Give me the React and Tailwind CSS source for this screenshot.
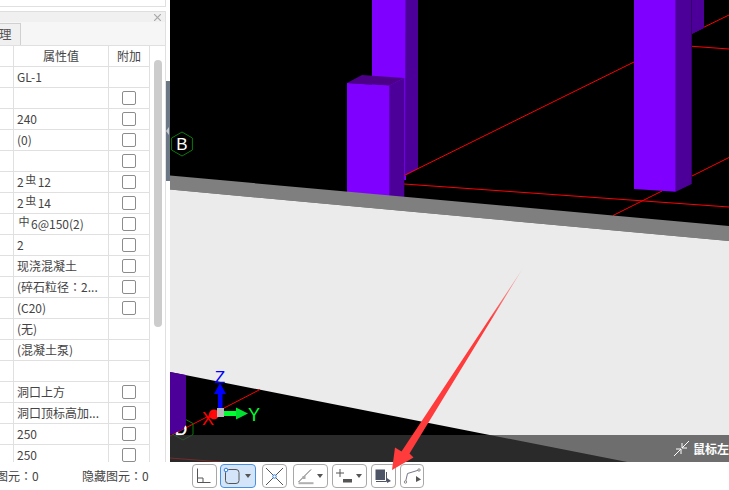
import React from "react";

const D = ({ t }) => <span className="text-[11px] leading-[0] align-[3px] mx-[1.5px]">{t}</span>;
const C = () => <span className="font-['Noto_Sans_CJK_JP',sans-serif]">：</span>;

const rows = [
  { v: "GL-1", c: false },
  { v: "", c: true },
  { v: "240", c: true },
  { v: "(0)", c: true },
  { v: "", c: true },
  { v: <>2<D t="虫" />12</>, c: true },
  { v: <>2<D t="虫" />14</>, c: true },
  { v: <><D t="中" />6@150(2)</>, c: true },
  { v: "2", c: true },
  { v: "现浇混凝土", c: true },
  { v: <>(碎石粒径<C />2...</>, c: true },
  { v: "(C20)", c: true },
  { v: "(无)", c: false },
  { v: "(混凝土泵)", c: false },
  { v: "", c: false },
  { v: "洞口上方", c: true },
  { v: "洞口顶标高加...", c: true },
  { v: "250", c: true },
  { v: "250", c: true },
];

function Caret() {
  return <span className="ml-auto mr-[4px] w-0 h-0 border-x-[3px] border-x-transparent border-t-[4px] border-t-[#555]" />;
}

function Btn({ w = "w-[24.5px]", active, ml, children, caret }) {
  return (
    <div className={`${w} ${ml} h-[24.5px] shrink-0 flex items-center rounded-[4px] border ${active ? "border-[#4a90e2] bg-[#d5e5f9]" : "border-[#a8a8a8] bg-white"}`}>
      <svg width="23" height="23" viewBox="0 0 23 23" fill="none" className="shrink-0">{children}</svg>
      {caret && <Caret />}
    </div>
  );
}

function Canvas() {
  return (
    <svg viewBox="170 0 559 462" width="559" height="462" className="block">
      <rect x="170" y="0" width="559" height="462" fill="#000" />
      {/* back column left */}
      <polygon points="372,0 406,0 406,180 372,180" fill="#8000ff" />
      <polygon points="405.5,0 418,0 418,169 405,176" fill="#4c0099" />
      {/* red lines */}
      <g stroke="#f00" strokeWidth="1" fill="none">
        <line x1="404" y1="175.5" x2="634" y2="62" />
        <line x1="692" y1="33" x2="729" y2="15" />
        <line x1="692" y1="46.3" x2="729" y2="49" />
        <line x1="404" y1="184" x2="729" y2="207" />
        <line x1="613" y1="215.5" x2="662" y2="191" />
        <line x1="692" y1="176" x2="729" y2="157.5" />
      </g>
      {/* short column */}
      <polygon points="347,83 362,75 404,78 389,85.7" fill="#4c0088" />
      <polygon points="389,85.7 404.3,78 404.3,197 389,197" fill="#4c0099" />
      <polygon points="347,83 389.3,85.7 389.3,197 347,193" fill="#8000ff" />
      {/* right column */}
      <polygon points="692,0 704,0 704,28 692,34" fill="#4c0099" />
      <polygon points="675.7,0 691.7,0 691.7,184 675.7,191.7" fill="#4c0099" />
      <polygon points="634,0 675.7,0 675.7,191.7 634,189" fill="#8000ff" />
      {/* ground */}
      <polygon points="170,175.6 729,226 729,241 170,189.6" fill="#7f7f7f" />
      <polygon points="170,189.6 729,241 729,482 170,372" fill="#ebebeb" />
      {/* axis line */}
      <line x1="170" y1="436" x2="260" y2="389.5" stroke="#f00" strokeWidth="1" />
      <line x1="170" y1="458" x2="222" y2="462" stroke="#f00" strokeWidth="1" />
      {/* B */}
      <polygon points="182,132 192.4,138 192.4,150 182,156 171.6,150 171.6,138" fill="none" stroke="#0a7a0a" strokeWidth="1" />
      <text x="182" y="150" textAnchor="middle" fontSize="17" fill="#fff" fontFamily="Liberation Sans, sans-serif">B</text>
      {/* D */}
      <polygon points="183,418 193,423.5 193,434.5 183,440 173,434.5 173,423.5" fill="none" stroke="#0a7a0a" strokeWidth="1" />
      <text x="181" y="435" textAnchor="middle" fontSize="17" fill="#fff" stroke="#fff" strokeWidth="0.4" fontFamily="Liberation Sans, sans-serif">D</text>
      <polygon points="170,372 186,375 186,425 182,430 170,435" fill="#4c0099" />
      {/* gizmo */}
      <rect x="218" y="393" width="4.5" height="15" fill="#0000ff" />
      <polygon points="220,383 226,394 214,394" fill="#0000ff" />
      <text x="220" y="383" textAnchor="middle" fontSize="17" fill="#0000ff" fontFamily="Liberation Sans, sans-serif">Z</text>
      <rect x="222" y="411" width="16" height="5" fill="#00ff30" />
      <polygon points="248,413.5 236,407.5 236,419.5" fill="#00e030" />
      <text x="254" y="421" textAnchor="middle" fontSize="18" fill="#00ff30" fontFamily="Liberation Sans, sans-serif">Y</text>
      <circle cx="214" cy="414.5" r="5" fill="#ff0a0a" />
      <rect x="217" y="408" width="7" height="9" fill="#b8b8b8" />
      <text x="208" y="425" textAnchor="middle" fontSize="18" fill="#f00" fontFamily="Liberation Sans, sans-serif">X</text>
    </svg>
  );
}

export default function App() {
  return (
    <div className="relative w-[729px] h-[490px] overflow-hidden bg-white flex flex-col font-['Noto_Sans_CJK_SC','Liberation_Sans',sans-serif] text-[12px] text-[#444]">
      <div className="flex h-[462px] shrink-0">
        <aside className="w-[170px] shrink-0 flex bg-white">
          <div className="w-[166px] shrink-0 flex flex-col">
            <div className="h-[7px] shrink-0 border-b border-r border-[#e0e0e0]" />
            <div className="h-[4px] shrink-0" />
            <div className="flex-1 min-h-0 flex flex-col border-r border-[#e0e0e0] overflow-hidden">
              <div className="h-[11px] shrink-0 bg-[#f0f0f0] border-t border-[#dedede] flex items-center justify-end pr-[4px]">
                <svg width="7" height="7" viewBox="0 0 7 7" stroke="#a8a8a8" strokeWidth="1.2"><path d="M0 0L7 7M7 0L0 7" /></svg>
              </div>
              <div className="h-[24px] shrink-0 bg-[#f6f6f6] border-b border-[#e0e0e0] pt-[1px] flex">
                <div className="w-[21px] h-[22px] bg-[#f0f0f0] border-t border-r border-[#d0d0d0] overflow-hidden flex items-center text-[#555] text-[12.5px] whitespace-nowrap">
                  <span className="-ml-[1px]">理</span>
                </div>
              </div>
              <div className="flex flex-1 min-h-0">
                <div className="w-[150px] shrink-0">
                  <div className="h-[21px] flex border-b border-[#e0e0e0] leading-[20px]">
                    <div className="w-[14px] shrink-0 border-r border-[#e0e0e0]" />
                    <div className="w-[95px] shrink-0 border-r border-[#e0e0e0] text-center">属性值</div>
                    <div className="w-[41px] shrink-0 border-r border-[#e0e0e0] text-center">附加</div>
                  </div>
                  {rows.map((r, i) => (
                    <div key={i} className="h-[21px] flex border-b border-[#e0e0e0] leading-[20px]">
                      <div className="w-[14px] shrink-0 border-r border-[#e0e0e0]" />
                      <div className="w-[95px] shrink-0 border-r border-[#e0e0e0] pl-[3px] whitespace-nowrap overflow-hidden">{r.v}</div>
                      <div className="w-[41px] shrink-0 border-r border-[#e0e0e0] flex items-center justify-center">
                        {r.c && <span className="w-[14px] h-[14px] border border-[#8c8c8c] rounded-[2px] bg-white" />}
                      </div>
                    </div>
                  ))}
                </div>
                <div className="ml-[4px] mt-[14px] w-[8px] h-[267px] rounded-full bg-[#cccccc]" />
              </div>
            </div>
          </div>
          <div className="w-[4px] shrink-0">
            <div className="mt-[81px] h-[100px] bg-[#6b7785] flex items-center">
              <span className="w-0 h-0 border-y-[4px] border-y-transparent border-r-[3px] border-r-[#c8ccd0]" />
            </div>
          </div>
        </aside>
        <main className="relative flex-1 min-w-0 overflow-hidden">
          <Canvas />
          <div className="absolute left-0 right-0 bottom-0 h-[27px] bg-[rgba(59,59,59,0.71)] flex items-center pl-[504px] gap-[4px] text-white text-[12px] font-bold whitespace-nowrap">
            <svg width="15" height="15" viewBox="0 0 15 15" fill="none" stroke="#fff" strokeWidth="1" className="shrink-0">
              <path d="M15 0L8 7M8 2V7H13M0 15L7 8M2 8H7V13" />
            </svg>
            <span>鼠标左</span>
          </div>
        </main>
      </div>
      <footer className="flex-1 flex items-center bg-white min-h-0 overflow-hidden">
        <span className="-ml-[4px] w-[86px] shrink-0 whitespace-nowrap">图元<C />0</span>
        <span className="w-[110px] shrink-0 whitespace-nowrap">隐藏图元<C />0</span>
        <Btn>
          <path d="M4.5 3.5V17.5H17.5M4.5 13H10V17.5" stroke="#555" />
        </Btn>
        <Btn w="w-[36px]" ml="ml-[3.5px]" active caret>
          <rect x="4.5" y="4.5" width="13.5" height="14" rx="3" stroke="#555" />
          <circle cx="5" cy="5" r="1.8" fill="#fff" stroke="#2f80e0" />
        </Btn>
        <Btn ml="ml-[6px]">
          <path d="M3 3L20 20M20 3L3 20" stroke="#555" />
          <circle cx="11.5" cy="11.5" r="1.7" fill="#fff" stroke="#2f80e0" />
        </Btn>
        <Btn w="w-[35px]" ml="ml-[6.5px]" caret>
          <path d="M4.5 17L17 4.5" stroke="#666" />
          <rect x="8.5" y="11" width="3" height="3" fill="#aaa" />
          <path d="M4.5 18.2H19.5" stroke="#b0b0b0" strokeWidth="2" />
        </Btn>
        <Btn w="w-[35px]" ml="ml-[4px]" caret>
          <path d="M7 4V12M3 8H11" stroke="#555" />
          <rect x="10" y="14" width="9" height="3.5" fill="#555" />
        </Btn>
        <Btn ml="ml-[4px]">
          <rect x="4" y="5" width="8.5" height="9.5" fill="#4d5566" stroke="#4d5566" />
          <path d="M4 16.5H14.5V7" stroke="#4d5566" />
          <path d="M15 13L19 16L15 18Z" fill="#4d5566" />
        </Btn>
        <Btn ml="ml-[4px]">
          <path d="M4.5 17L6.5 8.5L18 5" stroke="#778" />
          <circle cx="4.5" cy="17" r="1.2" fill="#fff" stroke="#888" />
          <circle cx="18" cy="5" r="1.2" fill="#fff" stroke="#888" />
          <path d="M15 11L20 14.5L15 17Z" fill="#555" />
        </Btn>
      </footer>
      <svg className="absolute left-0 top-0 pointer-events-none" width="729" height="490" viewBox="0 0 729 490" fill="none">
        <defs>
          <linearGradient id="tail" x1="523" y1="268" x2="490" y2="320" gradientUnits="userSpaceOnUse">
            <stop offset="0" stopColor="#ff3b3b" stopOpacity="0.25" />
            <stop offset="1" stopColor="#ff3b3b" />
          </linearGradient>
        </defs>
        <path d="M523 268L409.5 453.5L413.5 457.5L392 470L395 447.5L401.5 451.5Z" fill="url(#tail)" />
      </svg>
    </div>
  );
}
